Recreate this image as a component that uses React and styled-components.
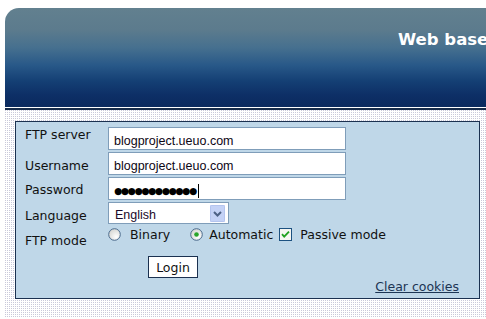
import React from "react";
import styled, { createGlobalStyle } from "styled-components";

const GlobalStyle = createGlobalStyle`
  html, body {
    margin: 0;
    padding: 0;
    background: #ffffff;
    overflow: hidden;
  }
  body {
    font-family: "DejaVu Sans", Verdana, sans-serif;
    font-size: 12.5px;
    color: #111;
  }
`;

const Page = styled.div`
  padding: 8px 0 0 5px;
`;

const Header = styled.header`
  height: 99px;
  border-top-left-radius: 14px;
  background: linear-gradient(
    to bottom,
    #62808f 0%,
    #5c7b8d 22%,
    #46708f 40%,
    #285888 58%,
    #143f74 74%,
    #0d2f66 88%,
    #0b2a5e 100%
  );
  padding: 22px 0 0 393px;
  box-sizing: border-box;
  overflow: hidden;
`;

const Title = styled.h1`
  margin: 0;
  font-family: "DejaVu Sans", Verdana, sans-serif;
  font-weight: bold;
  font-size: 16.5px;
  line-height: 20px;
  color: #ffffff;
  white-space: nowrap;
`;

const HeaderRule = styled.div`
  border-top: 1px solid #ffffff;
  border-bottom: 2px solid #172c4a;
`;

const Content = styled.main`
  background-color: #c9c9da;
  background-image: linear-gradient(to right, transparent 50%, #ffffff 50%),
    linear-gradient(to bottom, transparent 50%, #ffffff 50%);
  background-size: 2px 2px;
  padding: 11px 0 19px 10px;
`;

const Panel = styled.section`
  width: 465px;
  box-sizing: border-box;
  border: 1px solid #1b3150;
  background: #bfd7e8;
  padding: 5px 20px 4px 9px;
`;

const Row = styled.div`
  display: flex;
  align-items: flex-start;
  margin-top: ${(p) => p.$gap || 0}px;
`;

const Label = styled.div`
  width: 83px;
  padding-top: ${(p) => p.$offset || 0}px;
  line-height: 15px;
  white-space: nowrap;
`;

const Field = styled.div`
  width: 238px;
  height: 23px;
  box-sizing: border-box;
  border: 1px solid #7f9db9;
  background: #ffffff;
  padding: 4px 0 0 5px;
  display: flex;
  align-items: center;
  font-family: "Liberation Sans", Arial, sans-serif;
  font-size: 12.5px;
  color: #0d0614;
`;

const Dots = styled.span`
  font-family: "DejaVu Sans", sans-serif;
  font-size: 9.3px;
  letter-spacing: -1.3px;
  color: #000;
`;

const Caret = styled.span`
  display: inline-block;
  width: 1px;
  height: 14px;
  background: #000;
  margin-left: 2px;
`;

const Select = styled.div`
  width: 121px;
  height: 22px;
  box-sizing: border-box;
  border: 1px solid #7f9db9;
  background: #ffffff;
  padding: 0 3px 0 6px;
  display: flex;
  align-items: center;
  justify-content: space-between;
  font-family: "Liberation Sans", Arial, sans-serif;
  font-size: 12.5px;
  color: #1a0a2a;
`;

const SelectValue = styled.span`
  padding-top: 4px;
`;

const ModeGroup = styled.div`
  display: flex;
  align-items: center;
  height: 13px;
`;

const Option = styled.label`
  display: flex;
  align-items: center;
  gap: ${(p) => p.$gap}px;
  margin-right: ${(p) => p.$after || 0}px;
  line-height: 15px;
  white-space: nowrap;
`;

const ButtonRow = styled.div`
  padding: 8px 0 0 123px;
`;

const LoginButton = styled.button`
  width: 50px;
  height: 22px;
  box-sizing: border-box;
  border: 1px solid #1b3150;
  background: #ffffff;
  font-family: "DejaVu Sans", Verdana, sans-serif;
  font-size: 12.5px;
  color: #111;
  padding: 0;
  cursor: pointer;
`;

const LinkRow = styled.div`
  display: flex;
  justify-content: flex-end;
  line-height: 15px;
  margin-top: 1px;
`;

const ClearLink = styled.a`
  color: #1c3554;
  text-decoration: underline;
  font-size: 12.5px;
`;

const Radio = ({ checked }) => (
  <svg width="13" height="13" viewBox="0 0 13 13">
    <defs>
      <radialGradient id={checked ? "rg1" : "rg0"} cx="0.65" cy="0.7" r="0.7">
        <stop offset="0" stopColor="#ffffff" />
        <stop offset="1" stopColor="#d8d8d4" />
      </radialGradient>
    </defs>
    <circle cx="6.5" cy="6.5" r="5.8" fill={`url(#${checked ? "rg1" : "rg0"})`} stroke="#4a6a8c" strokeWidth="1" />
    {checked && <circle cx="6.5" cy="6.5" r="2.3" fill="#2aa52a" />}
  </svg>
);

const Check = () => (
  <svg width="13" height="13" viewBox="0 0 13 13">
    <rect x="0.5" y="0.5" width="12" height="12" fill="#f6f6f2" stroke="#1c5180" />
    <path d="M3 6.2 L5.2 8.6 L10 3.6" fill="none" stroke="#21a121" strokeWidth="1.8" />
  </svg>
);

const Arrow = () => (
  <svg width="15" height="17" viewBox="0 0 15 17">
    <rect x="0" y="0" width="15" height="17" rx="1" fill="#c4d2f6" />
    <rect x="0.5" y="0.5" width="14" height="16" rx="1" fill="none" stroke="#b4c4ee" />
    <path d="M4 7 L7.5 10.5 L11 7" fill="none" stroke="#4d6185" strokeWidth="2" />
  </svg>
);

export default function App() {
  return (
    <>
      <GlobalStyle />
      <Page>
        <Header>
          <Title>Web based FTP</Title>
        </Header>
        <HeaderRule />
        <Content>
          <Panel>
            <Row>
              <Label $offset={0}>FTP server</Label>
              <Field>blogproject.ueuo.com</Field>
            </Row>
            <Row $gap={2}>
              <Label $offset={6}>Username</Label>
              <Field>blogproject.ueuo.com</Field>
            </Row>
            <Row $gap={2}>
              <Label $offset={5}>Password</Label>
              <Field>
                <Dots>●●●●●●●●●●●●</Dots>
                <Caret />
              </Field>
            </Row>
            <Row $gap={2}>
              <Label $offset={6}>Language</Label>
              <Select>
                <SelectValue>English</SelectValue>
                <Arrow />
              </Select>
            </Row>
            <Row $gap={4}>
              <Label $offset={5}>FTP mode</Label>
              <ModeGroup>
                <Option $gap={9} $after={20}>
                  <Radio />
                  Binary
                </Option>
                <Option $gap={6} $after={6}>
                  <Radio checked />
                  Automatic
                </Option>
                <Option $gap={8}>
                  <Check />
                  Passive mode
                </Option>
              </ModeGroup>
            </Row>
            <ButtonRow>
              <LoginButton>Login</LoginButton>
            </ButtonRow>
            <LinkRow>
              <ClearLink href="#">Clear cookies</ClearLink>
            </LinkRow>
          </Panel>
        </Content>
      </Page>
    </>
  );
}
